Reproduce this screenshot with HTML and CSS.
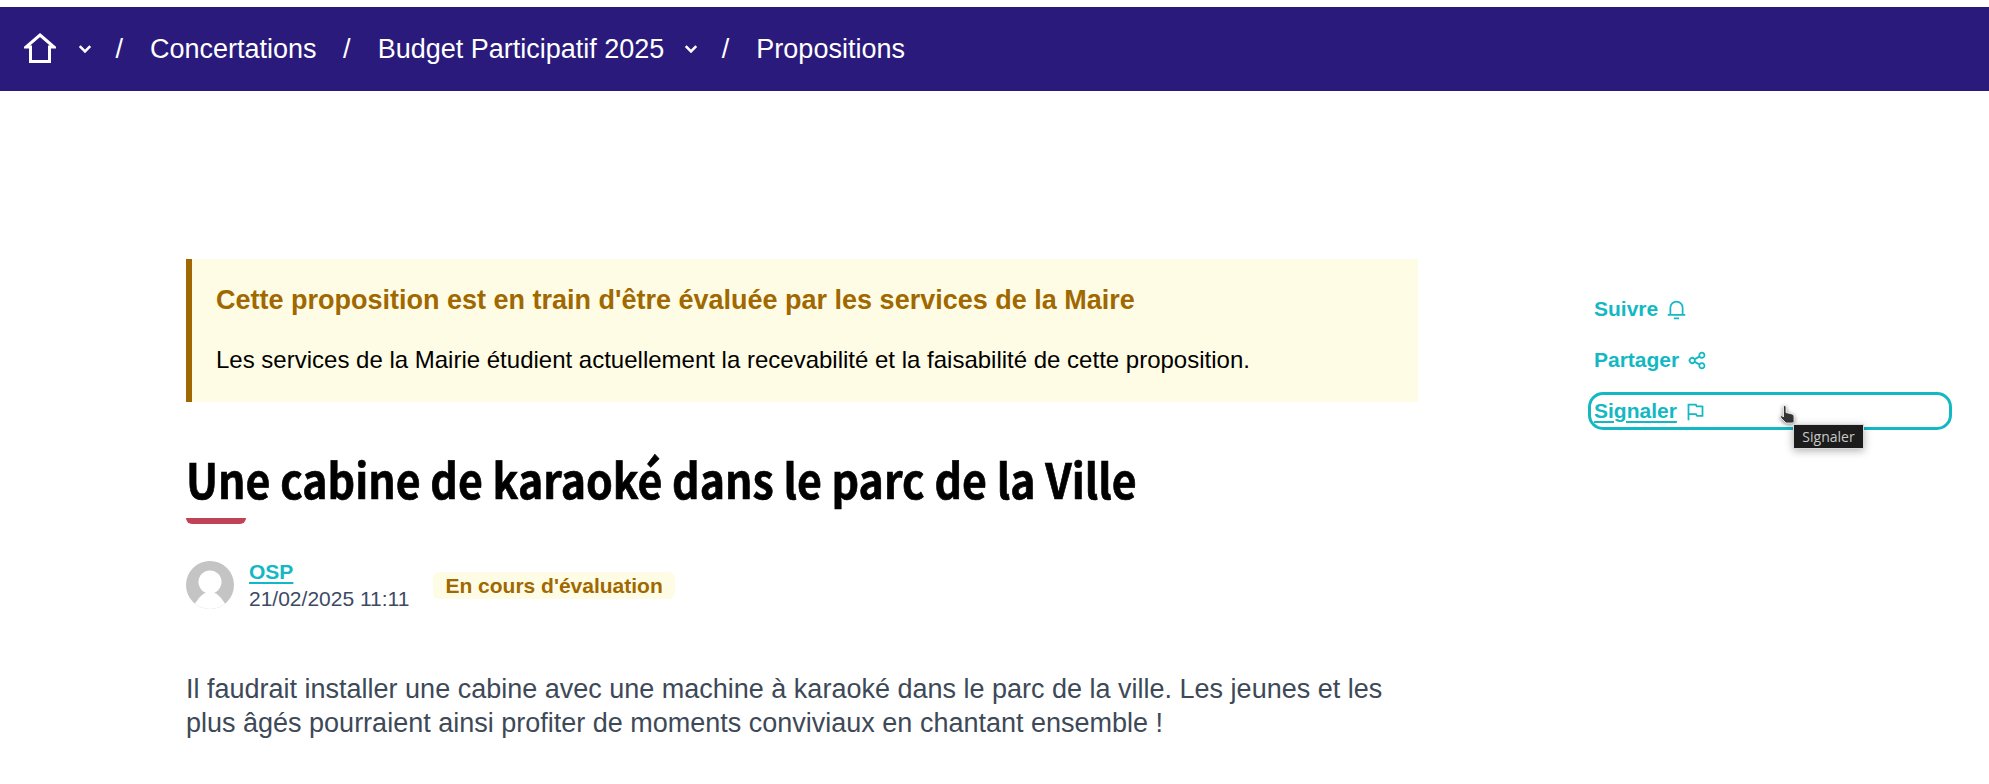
FILE: index.html
```html
<!DOCTYPE html>
<html lang="fr">
<head>
    <meta charset="UTF-8">
    <meta name="viewport" content="width=device-width, initial-scale=1.0">
    <title>Une cabine de karaoké dans le parc de la Ville</title>
    <link rel="stylesheet" href="styles.css">
</head>
<body>
    <nav class="topbar">
        <a class="home-link" href="#">
            <svg class="home-icon" viewBox="0 0 32 32" fill="none" stroke="#fff" stroke-width="3"><path d="M16 2 L30 14 H25.500 V28.500 H6.500 V14 H2 Z"/></svg>
        </a>
        <svg class="chevron chevron-home" viewBox="0 0 12 12" fill="none" stroke="#fff" stroke-width="2.200"><path d="M1.500 3.500 L6 8 L10.500 3.500"/></svg>
        <span class="sep">/</span>
        <a class="crumb" href="#">Concertations</a>
        <span class="sep">/</span>
        <a class="crumb" href="#">Budget Participatif 2025</a>
        <svg class="chevron chevron-budget" viewBox="0 0 12 12" fill="none" stroke="#fff" stroke-width="2.200"><path d="M1.500 3.500 L6 8 L10.500 3.500"/></svg>
        <span class="sep">/</span>
        <a class="crumb" href="#">Propositions</a>
    </nav>

    <div class="page">
        <main class="content">
            <section class="notice">
                <h2>Cette proposition est en train d'être évaluée par les services de la Maire</h2>
                <p>Les services de la Mairie étudient actuellement la recevabilité et la faisabilité de cette proposition.</p>
            </section>

            <h1>Une cabine de karaoké dans le parc de la Ville</h1>
            <div class="title-bar"></div>

            <div class="meta">
                <svg class="avatar" viewBox="0 0 48 48"><defs><clipPath id="round"><circle cx="24" cy="24" r="24"/></clipPath></defs><circle cx="24" cy="24" r="24" fill="#c4c4c4"/><g clip-path="url(#round)"><circle cx="24" cy="21" r="11.500" fill="#fff"/><path d="M5 48 L13 37 C16 33 20 31 24 31 C28 31 32 33 35 37 L43 48 Z" fill="#fff"/></g></svg>
                <div class="author">
                    <a href="#">OSP</a>
                    <span>21/02/2025 11:11</span>
                </div>
                <span class="badge">En cours d'évaluation</span>
            </div>

            <p class="body-text">Il faudrait installer une cabine avec une machine à karaoké dans le parc de la ville. Les jeunes et les plus âgés pourraient ainsi profiter de moments conviviaux en chantant ensemble !</p>
        </main>

        <aside class="actions">
            <a class="action" href="#">Suivre
                <svg viewBox="0 0 24 24"><path d="M20 17h2v2H2v-2h2v-7a8 8 0 1 1 16 0v7zm-2 0v-7a6 6 0 1 0-12 0v7h12zm-9 4h6v2H9v-2z"/></svg>
            </a>
            <a class="action" href="#">Partager
                <svg viewBox="0 0 24 24"><path d="M13.120 17.023l-4.199-2.290a4 4 0 1 1 0-5.465l4.200-2.290a4 4 0 1 1 .959 1.755l-4.200 2.290a4.008 4.008 0 0 1 0 1.954l4.199 2.290a4 4 0 1 1-.959 1.755zM6 14a2 2 0 1 0 0-4 2 2 0 0 0 0 4zm11-6a2 2 0 1 0 0-4 2 2 0 0 0 0 4zm0 12a2 2 0 1 0 0-4 2 2 0 0 0 0 4z"/></svg>
            </a>
            <a class="action action-focus" href="#"><u>Signaler</u>
                <svg viewBox="0 0 24 24"><path d="M5 16v6H3V3h9.382a1 1 0 0 1 .894.553L14 5h6a1 1 0 0 1 1 1v11a1 1 0 0 1-1 1h-6.382a1 1 0 0 1-.894-.553L12 16H5zM5 5v9h8.236l1 2H19V7h-6.236l-1-2H5z"/></svg>
            </a>
        </aside>
    </div>

    <svg class="cursor" viewBox="0 0 16 19"><path d="M4.500 1 C5.500 .2 7 .8 7 2 V7.500 L13 9 C14.500 9.500 15 10.500 15 12 V16.500 L13.500 18 H7 L2 13 C.8 11.500 2 10 3.500 11 L4.500 12 Z" fill="#333" stroke="#fff" stroke-width=".8"/></svg>
    <div class="tooltip">Signaler</div>
</body>
</html>
```
FILE: styles.css
```css
body {
    margin: 0;
    padding-top: 7px;
    height: 777px;
    overflow: hidden;
    background: #fff;
    font-family: "Liberation Sans", Arial, sans-serif;
    position: relative;
}
a {
    text-decoration: none;
}
.topbar {
    height: 84px;
    background: #2a1a7c;
    display: flex;
    align-items: center;
    padding-left: 24px;
    color: #fff;
    font-size: 27px;
}
.topbar a {
    color: #fff;
}
.home-link {
    display: flex;
}
.home-icon {
    width: 32px;
    height: 32px;
}
.chevron {
    width: 14px;
    height: 14px;
    margin-right: -3px;
}
.chevron-home {
    margin-left: 22px;
}
.chevron-budget {
    margin-left: 20px;
}
.sep {
    margin: 0 27px 0 26.500px;
}
.page {
    display: flex;
    padding: 168px 0 0 186px;
}
.content {
    width: 1232px;
}
.notice {
    background: #fffce5;
    border-left: 6px solid #a06800;
    padding: 25px 24px 28px;
    height: 90px;
}
.notice h2 {
    margin: 0;
    font-size: 27px;
    line-height: 32px;
    color: #a06800;
}
.notice p {
    margin: 29px 0 0;
    font-size: 24px;
    line-height: 30px;
    color: #000;
}
h1 {
    margin: 46px 0 0;
    font-family: "Noto Sans CJK SC", "Noto Sans", sans-serif;
    font-size: 48px;
    line-height: 60px;
    font-weight: 700;
    color: #000;
    white-space: nowrap;
    -webkit-text-stroke: 0.7px #000;
    transform: scaleX(0.893);
    transform-origin: left center;
}
.title-bar {
    width: 60px;
    height: 6px;
    margin-top: 10px;
    background: #bf4256;
    border-radius: 0 0 6px 6px;
}
.meta {
    display: flex;
    align-items: center;
    margin-top: 34px;
}
.avatar {
    width: 48px;
    height: 48px;
}
.author {
    display: flex;
    flex-direction: column;
    margin-left: 15px;
    font-size: 21px;
    line-height: 27px;
    color: #3d4a64;
}
.author a {
    color: #14b8c4;
    font-weight: 700;
    align-self: flex-start;
    text-decoration: underline;
    text-decoration-thickness: 2px;
    text-underline-offset: 3px;
}
.badge {
    margin-left: 24px;
    padding: 0 12px;
    background: #fffce5;
    border-radius: 6px;
    font-size: 21px;
    line-height: 27px;
    font-weight: 700;
    color: #a06800;
}
.body-text {
    margin: 60px 0 0;
    font-size: 27px;
    line-height: 34px;
    color: #3e4958;
}
.actions {
    margin: 34px 0 0 173px;
    width: 358px;
    display: flex;
    flex-direction: column;
    gap: 19px;
}
.action {
    display: flex;
    align-items: center;
    gap: 8px;
    height: 32px;
    padding-left: 3px;
    font-size: 21px;
    font-weight: 700;
    color: #14b8c4;
    border-radius: 12px;
}
.action svg {
    width: 21px;
    height: 21px;
    fill: #14b8c4;
}
.action u {
    text-decoration-thickness: 2px;
    text-underline-offset: 3px;
}
.action-focus {
    outline: 3px solid #14b8c4;
}
.cursor {
    position: absolute;
    left: 1779px;
    top: 405px;
    width: 16px;
    height: 19px;
    filter: drop-shadow(0 1px 2px rgba(0, 0, 0, 0.5));
}
.tooltip {
    position: absolute;
    left: 1793px;
    top: 424px;
    width: 71px;
    height: 25px;
    box-sizing: border-box;
    background: #1c1c1c;
    border: 1px solid #d8d8d8;
    box-shadow: 0 2px 8px rgba(0, 0, 0, 0.3);
    color: #c8c8c8;
    font-family: "Open Sans", sans-serif;
    font-size: 14px;
    line-height: 23px;
    text-align: center;
}
```
